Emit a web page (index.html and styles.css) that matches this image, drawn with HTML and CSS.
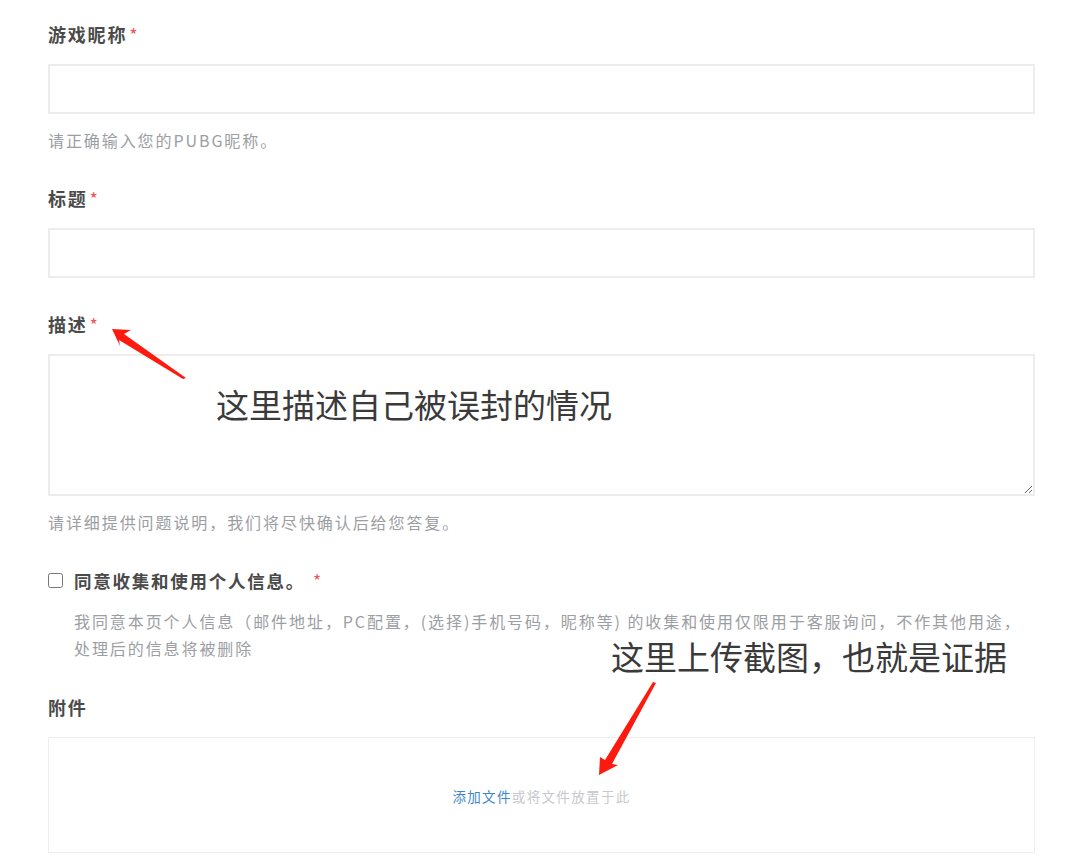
FILE: index.html
```html
<!DOCTYPE html>
<html lang="zh-CN">
<head>
<meta charset="utf-8">
<title>提交请求</title>
<link rel="stylesheet" href="styles.css">
</head>
<body>
<form class="form">
  <div class="field">
    <label class="label">游戏昵称<span class="req">*</span></label>
    <input class="input" type="text">
    <p class="hint">请正确输入您的PUBG昵称。</p>
  </div>
  <div class="field">
    <label class="label">标题<span class="req">*</span></label>
    <input class="input" type="text">
  </div>
  <div class="field">
    <label class="label">描述<span class="req">*</span></label>
    <textarea class="textarea"></textarea>
    <p class="hint">请详细提供问题说明，我们将尽快确认后给您答复。</p>
  </div>
  <div class="field">
    <div class="check-row">
      <input class="checkbox" type="checkbox">
      <span class="check-label">同意收集和使用个人信息。<span class="req">*</span></span>
    </div>
    <p class="consent">我同意本页个人信息（邮件地址，PC配置，(选择)手机号码，昵称等) 的收集和使用仅限用于客服询问，不作其他用途，<span class="consent-end">处理后的信息将被删除</span></p>
  </div>
  <div class="field">
    <label class="label">附件</label>
    <div class="dropzone"><span class="link">添加文件</span><span class="muted">或将文件放置于此</span></div>
  </div>
</form>

<div class="note note-desc">这里描述自己被误封的情况</div>
<div class="note note-upload">这里上传截图，也就是证据</div>

<svg class="arrow" width="1082" height="863" viewBox="0 0 1082 863" aria-hidden="true">
  <polygon points="112,329 131,330 124,334 186,378 183,379 119,340 120,346" fill="#ff1a0f"/>
  <polygon points="599,775 600,757 605,760 653,682 656,683 612,764 618,765" fill="#ff1a0f"/>
</svg>
</body>
</html>
```
FILE: styles.css
```css
html, body {
  margin: 0;
  padding: 0;
  background: #fff;
}
body {
  font-family: "Noto Sans CJK SC", "Liberation Sans", sans-serif;
  color: #444;
  position: relative;
  width: 1082px;
  height: 863px;
  overflow: hidden;
}
.form {
  width: 987px;
  margin-left: 48px;
  padding-top: 21px;
}
.field {
  display: flex;
  flex-direction: column;
  margin-bottom: 33px;
}
.label {
  font-size: 18px;
  line-height: 27px;
  font-weight: 700;
  color: #4a4a4a;
  letter-spacing: 0.1em;
  margin-bottom: 16px;
}
.req {
  color: #f0545a;
  font-weight: 400;
  margin-left: 2px;
}
.input {
  box-sizing: border-box;
  height: 50px;
  width: 987px;
  border: 2px solid #ececec;
  border-radius: 0;
  margin: 0;
  background: #fff;
  outline: none;
}
.textarea {
  box-sizing: border-box;
  height: 142px;
  width: 987px;
  border: 2px solid #ececec;
  border-radius: 0;
  margin: 0;
  resize: vertical;
  outline: none;
  display: block;
}
.hint {
  margin: 14px 0 0;
  font-size: 16px;
  line-height: 24px;
  color: #9b9ea3;
  letter-spacing: 0.12em;
}
.check-row {
  display: flex;
  align-items: center;
  height: 27px;
}
.checkbox {
  margin: 0 11px 0 0;
  width: 15px;
  height: 15px;
}
.check-label {
  font-size: 17.5px;
  font-weight: 700;
  color: #4a4a4a;
  letter-spacing: 0.1em;
}
.check-label .req {
  margin-left: 8px;
}
.consent {
  margin: 14px 0 -1px 26px;
  font-size: 16px;
  line-height: 27px;
  color: #9b9ea3;
  letter-spacing: 0.12em;
}
.dropzone {
  box-sizing: border-box;
  height: 116px;
  border: 1px solid #eeeeee;
  display: flex;
  align-items: center;
  justify-content: center;
  font-size: 13.5px;
  letter-spacing: 0.1em;
  padding-top: 2px;
}
.link {
  color: #3d87c9;
}
.muted {
  color: #c6c8cc;
}
.note {
  position: absolute;
  font-size: 33px;
  line-height: 36px;
  color: #3a3a3a;
  white-space: nowrap;
}
.note-desc {
  left: 216px;
  top: 386px;
}
.note-upload {
  left: 611px;
  top: 638px;
}
.arrow {
  position: absolute;
  left: 0;
  top: 0;
  pointer-events: none;
}
```
